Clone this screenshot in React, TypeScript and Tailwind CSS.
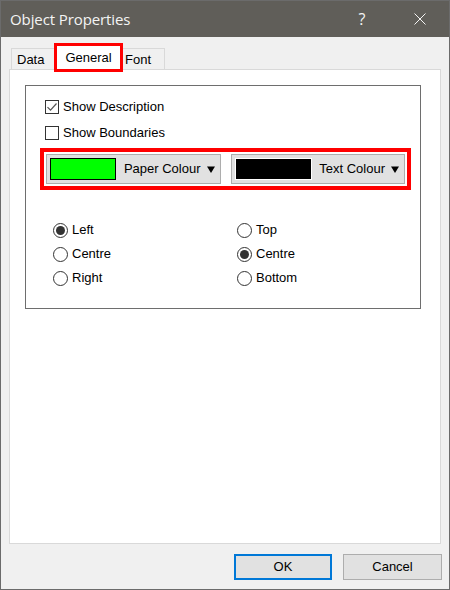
import React from "react";

function Arrow() {
  return (
    <svg width="8" height="7" viewBox="0 0 8 7" className="shrink-0">
      <path d="M0 0.5h8L4 7z" fill="#000" />
    </svg>
  );
}

function CheckBox({ checked, label }: { checked: boolean; label: string }) {
  return (
    <div className="h-[20px] flex items-center gap-[4px]">
      <div className="w-[14px] h-[14px] border border-[#333] bg-white flex items-center justify-center">
        {checked && (
          <svg width="12" height="12" viewBox="0 0 12 12">
            <path d="M1.5 6.2l3 3L10.5 2.5" fill="none" stroke="#555" strokeWidth="1.2" />
          </svg>
        )}
      </div>
      <span>{label}</span>
    </div>
  );
}

function Radio({ checked, label }: { checked: boolean; label: string }) {
  return (
    <div className="h-[20px] flex items-center gap-[4px]">
      <div className="w-[15px] h-[15px] rounded-full border border-[#333] bg-white flex items-center justify-center">
        {checked && <div className="w-[9px] h-[9px] rounded-full bg-[#333]" />}
      </div>
      <span>{label}</span>
    </div>
  );
}

function ColourButton({ label, swatch }: { label: string; swatch: "green" | "black" }) {
  return (
    <div className="w-[175px] h-[30px] bg-[#e1e1e1] border border-[#adadad] flex items-center pl-[3px] pr-[5px]">
      {swatch === "green" ? (
        <div className="w-[66px] h-[22px] bg-[#00ff00] border border-black" />
      ) : (
        <div className="w-[77px] h-[22px] bg-black border border-white" />
      )}
      <span className="ml-auto mr-[6px]">{label}</span>
      <Arrow />
    </div>
  );
}

export default function App() {
  return (
    <div className="w-[450px] h-[590px] flex flex-col bg-[#f0f0f0] border border-[#6b6b6b] font-['Liberation_Sans',Arial,sans-serif] text-[13px] text-black">
      {/* Title bar */}
      <div className="h-[36px] shrink-0 bg-[#605e59] flex items-center pl-[9px] pr-[14px] text-[#f4f4f4]">
        <span className="font-['Open_Sans',sans-serif] text-[15px] tracking-[-0.1px]">Object Properties</span>
        <span className="ml-auto w-[30px] text-center font-['Open_Sans',sans-serif] text-[16px]">?</span>
        <span className="ml-[28px] w-[30px] flex justify-center">
          <svg width="12" height="12" viewBox="0 0 12 12">
            <path d="M0.5 0.5l11 11M11.5 0.5l-11 11" stroke="#f4f4f4" strokeWidth="1" />
          </svg>
        </span>
      </div>

      <div className="flex-1 flex flex-col px-[8px]">
        {/* Tabs */}
        <div className="pt-[6px] flex items-end pl-[2px]">
          <div className="w-[44px] h-[21px] border border-b-0 border-[#d9d9d9] flex items-center pl-[5px] pt-[2px]">Data</div>
          <div className="relative z-10 -ml-[1px] -mb-[3px] w-[69px] h-[29px] bg-white border-[3px] border-[#ff0000] flex items-center justify-center">
            General
          </div>
          <div className="w-[42px] h-[21px] border border-l-0 border-b-0 border-[#d9d9d9] flex items-center pl-[2px] pt-[2px]">Font</div>
        </div>

        {/* Panel */}
        <div className="h-[475px] bg-white border border-[#d9d9d9] pt-[15px] pl-[15px]">
          <div className="w-[396px] h-[224px] border border-[#6e6e6e] flex flex-col">
            <div className="pt-[11px] pl-[19px] flex flex-col gap-[6px]">
              <CheckBox checked label="Show Description" />
              <CheckBox checked={false} label="Show Boundaries" />
            </div>

            <div className="ml-[14px] mt-[5px] w-[371px] h-[42px] border-4 border-[#ff0000] p-[2px] flex gap-[10px]">
              <ColourButton label="Paper Colour" swatch="green" />
              <ColourButton label="Text Colour" swatch="black" />
            </div>

            <div className="mt-[30px] pl-[27px] flex">
              <div className="w-[184px] flex flex-col gap-[4px]">
                <Radio checked label="Left" />
                <Radio checked={false} label="Centre" />
                <Radio checked={false} label="Right" />
              </div>
              <div className="flex flex-col gap-[4px]">
                <Radio checked={false} label="Top" />
                <Radio checked label="Centre" />
                <Radio checked={false} label="Bottom" />
              </div>
            </div>
          </div>
        </div>

        {/* Buttons */}
        <div className="mt-[10px] flex justify-end gap-[11px] -mr-[1px]">
          <button className="w-[98px] h-[26px] bg-[#e1e1e1] border-2 border-[#0078d7]">OK</button>
          <button className="w-[99px] h-[26px] bg-[#e1e1e1] border border-[#adadad]">Cancel</button>
        </div>
      </div>
    </div>
  );
}
